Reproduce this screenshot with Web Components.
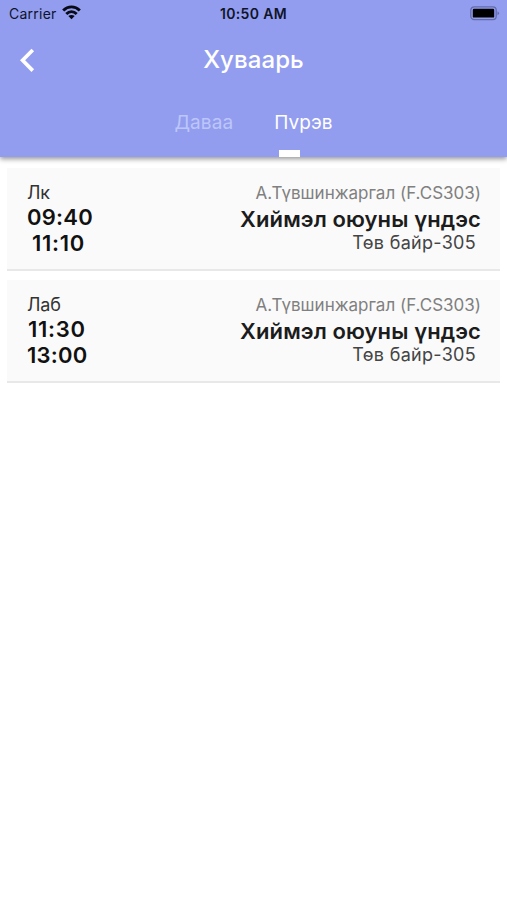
<!DOCTYPE html>
<html lang="mn">
<head>
<meta charset="utf-8">
<title>Хуваарь</title>
<style>
body{margin: 0;background: #fff;font-family: Inter, "Liberation Sans", sans-serif;color: #111;}
</style>
</head>
<body>
<schedule-page></schedule-page>

<script>
class StatusBar extends HTMLElement {
    connectedCallback() {
        this.shadow = this.attachShadow({mode: 'open'});
        this.shadow.innerHTML = StatusBar.css + `
<div class="left"><span class="carrier">Carrier</span>
<svg width="19" height="15" viewBox="0 0 19 15" fill="none" stroke="#080a16" stroke-width="2.9">
<path d="M1.2 5.5C6 .6 13 .6 17.8 5.5"/>
<path d="M4.3 9C7.4 6 11.6 6 14.7 9"/>
<path d="M9.5 14.2L6.3 11C8.2 9.5 10.8 9.5 12.7 11Z" fill="#080a16" stroke="none"/>
</svg></div>
<div class="time">10:50 AM</div>
<div class="right"><svg width="30" height="15" viewBox="0 0 30 15">
<rect x=".8" y=".8" width="25.4" height="12.8" rx="3.4" fill="none" stroke="#646ca8" stroke-width="1.3"/>
<rect x="2.8" y="2.8" width="21.4" height="8.8" rx="1.2" fill="#000"/>
<path d="M27.5 5.2Q30.6 7.2 27.5 9.3Z" fill="#646ca8"/>
</svg></div>`;
    }
    static get css() {
        return `<style>
:host{display: grid;grid-template-columns: 1fr auto 1fr;align-items: center;height: 27px;color: #101428;}
.left{display: flex;align-items: center;padding-left: 9px;gap: 5px;}
.carrier{font-size: 14px;letter-spacing: .25px;}
.time{font-size: 14px;font-weight: 600;letter-spacing: .35px;}
.right{display: flex;justify-content: flex-end;padding-right: 7px;}
svg{display: block;}
.left svg{margin-top: -2px;}
</style>`;
    }
}

class NavBar extends HTMLElement {
    connectedCallback() {
        this.shadow = this.attachShadow({mode: 'open'});
        this.shadow.innerHTML = NavBar.css + `
<svg width="15" height="25" viewBox="0 0 15 25"><path d="M12.8 2L2.6 12.2L12.8 22.6" fill="none" stroke="#fff" stroke-width="3.7"/></svg>
<div class="title"><slot></slot></div>`;
    }
    static get css() {
        return `<style>
:host{display: grid;grid-template-columns: 1fr auto 1fr;align-items: center;height: 66px;}
svg{display: block;margin-left: 20px;}
.title{font-size: 24px;font-weight: 500;line-height: 30px;letter-spacing: .1px;color: #fff;}
</style>`;
    }
}

class TabItem extends HTMLElement {
    connectedCallback() {
        this.shadow = this.attachShadow({mode: 'open'});
        this.shadow.innerHTML = TabItem.css + '<div class="label"><slot></slot></div><div class="mark"></div>';
    }
    static get css() {
        return `<style>
:host{display: flex;flex-direction: column;align-items: flex-start;justify-content: space-between;height: 46px;color: #bdc6f8;font-size: 19px;letter-spacing: .1px;}
:host([active]){color: #fff;}
.label{line-height: 24px;}
.mark{width: 21px;height: 7px;margin-left: 5px;}
:host([active]) .mark{background: #fff;}
</style>`;
    }
}

class LessonCard extends HTMLElement {
    connectedCallback() {
        this.shadow = this.attachShadow({mode: 'open'});
        this.shadow.innerHTML = LessonCard.css + `
<div class="col">
<div class="type"><slot name="type"></slot></div>
<div class="time"><slot name="start"></slot></div>
<div class="time"><slot name="end"></slot></div>
</div>
<div class="col info">
<div class="teacher"><slot name="teacher"></slot></div>
<div class="name"><slot name="name"></slot></div>
<div class="room"><slot name="room"></slot></div>
</div>`;
    }
    static get css() {
        return `<style>
:host{display: flex;justify-content: space-between;box-sizing: border-box;height: 103px;padding: 14px 19px 0 20px;background: #fafafa;border-bottom: 2px solid #e8e8e8;white-space: nowrap;}
.col{display: flex;flex-direction: column;align-items: flex-start;}
.type{font-size: 18px;line-height: 22px;letter-spacing: -.2px;color: #333;}
.time{font-size: 22px;line-height: 26px;font-weight: 600;letter-spacing: .25px;}
.info{align-items: flex-end;}
.teacher{font-size: 17px;line-height: 22px;color: #808080;}
.name{font-size: 22px;line-height: 28px;font-weight: 600;letter-spacing: .1px;color: #1c1c1c;padding-top: 1px;}
.room{font-size: 18px;line-height: 19px;letter-spacing: .3px;color: #444;padding-right: 5px;}
::slotted(.in1){margin-left: 1px;letter-spacing: .7px;}
::slotted(.in5){margin-left: 5px;letter-spacing: .7px;}
</style>`;
    }
}

class SchedulePage extends HTMLElement {
    connectedCallback() {
        this.shadow = this.attachShadow({mode: 'open'});
        this.shadow.innerHTML = SchedulePage.css + `
<header>
<status-bar></status-bar>
<nav-bar>Хуваарь</nav-bar>
<div class="tabs"><tab-item>Даваа</tab-item><tab-item active>Пvрэв</tab-item></div>
</header>
<main>
<lesson-card>
<span slot="type">Лк</span><span slot="start">09:40</span><span slot="end" class="in5">11:10</span>
<span slot="teacher">А.Түвшинжаргал (F.CS303)</span><span slot="name">Хиймэл оюуны үндэс</span><span slot="room">Төв байр-305</span>
</lesson-card>
<lesson-card>
<span slot="type">Лаб</span><span slot="start" class="in1">11:30</span><span slot="end">13:00</span>
<span slot="teacher">А.Түвшинжаргал (F.CS303)</span><span slot="name">Хиймэл оюуны үндэс</span><span slot="room">Төв байр-305</span>
</lesson-card>
</main>`;
    }
    static get css() {
        return `<style>
:host{display: block;min-height: 900px;background: #fff;}
header{height: 157px;background: #929df0;box-shadow: 0 2px 5px rgba(0,0,0,.42);}
.tabs{display: flex;justify-content: center;gap: 41px;padding-top: 18px;}
main{display: flex;flex-direction: column;gap: 9px;padding: 11px 7px 0;}
</style>`;
    }
}

window.customElements.define('status-bar', StatusBar);
window.customElements.define('nav-bar', NavBar);
window.customElements.define('tab-item', TabItem);
window.customElements.define('lesson-card', LessonCard);
window.customElements.define('schedule-page', SchedulePage);
</script>
</body>
</html>
